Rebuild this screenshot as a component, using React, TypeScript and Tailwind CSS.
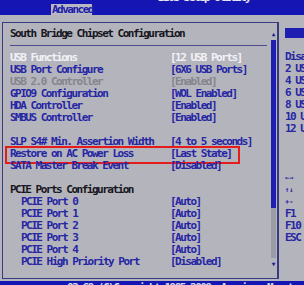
const rows: { label: string; value?: string; tone: "white" | "blue" | "gray" | "dark"; indent?: boolean; boxed?: boolean }[] = [
  { label: "USB Functions", value: "[12 USB Ports]", tone: "white" },
  { label: "USB Port Configure", value: "[6X6 USB Ports]", tone: "blue" },
  { label: "USB 2.0 Controller", value: "[Enabled]", tone: "gray" },
  { label: "GPIO9 Configuration", value: "[WOL Enabled]", tone: "blue" },
  { label: "HDA Controller", value: "[Enabled]", tone: "blue" },
  { label: "SMBUS Controller", value: "[Enabled]", tone: "blue" },
  { label: "", tone: "blue" },
  { label: "SLP_S4# Min. Assertion Width", value: "[4 to 5 seconds]", tone: "blue" },
  { label: "Restore on AC Power Loss", value: "[Last State]", tone: "blue", boxed: true },
  { label: "SATA Master Break Event", value: "[Disabled]", tone: "blue" },
  { label: "", tone: "blue" },
  { label: "PCIE Ports Configuration", tone: "dark" },
  { label: "PCIE Port 0", value: "[Auto]", tone: "blue", indent: true },
  { label: "PCIE Port 1", value: "[Auto]", tone: "blue", indent: true },
  { label: "PCIE Port 2", value: "[Auto]", tone: "blue", indent: true },
  { label: "PCIE Port 3", value: "[Auto]", tone: "blue", indent: true },
  { label: "PCIE Port 4", value: "[Auto]", tone: "blue", indent: true },
  { label: "PCIE High Priority Port", value: "[Disabled]", tone: "blue", indent: true },
];

const toneClass = {
  white: "text-[#f2f2f6]",
  blue: "text-[#2626a4]",
  gray: "text-[#85858e]",
  dark: "text-[#16161e]",
};

const help = ["Disable USB", "2 USB ports", "4 USB ports", "6 USB ports", "8 USB ports", "10 USB ports", "12 USB ports"];
const keys = ["←→", "↑↓", "+-", "F1", "F10", "ESC"];

export default function App() {
  return (
    <div
      className="w-[304px] h-[285px] overflow-hidden bg-[#b4b4bc] font-bold text-[11px] leading-[12px] tracking-[-1.5px] flex flex-col"
      style={{ fontFamily: '"DejaVu Sans Mono", "Liberation Mono", monospace' }}
    >
      {/* top bar */}
      <div className="relative h-[15px] shrink-0 bg-[#1515b4] overflow-hidden">
        <span className="absolute left-[158px] top-[-8px] text-[#e8e8f0]">BIOS Setup Utility</span>
        <div className="absolute left-[51px] top-[4px] w-[41px] h-[11px] bg-[#b8b8c2] text-[#2020a8] leading-[11px] pl-[1px]">
          Advanced
        </div>
      </div>

      {/* body */}
      <div className="flex flex-1 pt-[7px]">
        <div className="ml-[2px] w-[276px] h-[257px] border border-[#3a3a82] flex">
          <div className="flex-1 pt-[5px]">
            <div className="pl-[7px] text-[#16161e]">South Bridge Chipset Configuration</div>
            <div className="ml-[7px] mr-[4px] mt-[5px] h-px bg-[#4c4c8c]" />
            <div className="mt-[6px]">
              {rows.map((r, i) => (
                <div key={i} className={`relative flex h-[12px] ${toneClass[r.tone]}`}>
                  <span className={`${r.indent ? "pl-[18px]" : "pl-[7px]"} w-[167px] whitespace-nowrap`}>
                    {r.label}
                  </span>
                  {r.value && <span className="whitespace-nowrap">{r.value}</span>}
                  {r.boxed && (
                    <div className="absolute left-[2px] top-[-2px] w-[235px] h-[18px] border-2 border-[#e41c1c]" />
                  )}
                </div>
              ))}
            </div>
          </div>
          {/* scrollbar */}
          <div className="w-[5px] mr-[1px] flex flex-col items-center">
            <div className="mt-[8px] h-[6px] text-[6px] leading-[6px] text-[#1a1a8c] tracking-normal">▲</div>
            <div className="mt-[3px] w-[5px] h-[168px] bg-[#1e1eb0]" />
            <div className="w-[5px] h-[50px] bg-[#9c9ca6]" />
            <div className="mt-[3px] h-[6px] text-[6px] leading-[6px] text-[#1a1a8c] tracking-normal">▼</div>
          </div>
        </div>

        {/* help panel */}
        <div className="flex-1 h-[257px] border-l border-[#3a3a82] pl-[6px] overflow-hidden">
          <div className="mt-[6px] h-[10px] bg-[#1e1eb0]" />
          <div className="mt-[13px] text-[#2626a4]">
            {help.map((h) => (
              <div key={h} className="h-[12px] whitespace-nowrap">{h}</div>
            ))}
          </div>
          <div className="mt-[37px] text-[#2626a4]">
            {keys.map((k) => (
              <div key={k} className={`h-[12px] whitespace-nowrap ${k.length === 2 && !k.startsWith("F") ? "text-[7px] tracking-normal" : ""}`}>
                {k}
              </div>
            ))}
          </div>
        </div>
      </div>

      {/* bottom bar */}
      <div className="h-[4px] shrink-0 bg-[#1515b4] relative">
        <span className="absolute left-[62px] top-[1px] text-[#d8d8e8] whitespace-nowrap">
          v02.68 (C)Copyright 1985-2009, American Megatrends, Inc.
        </span>
      </div>
    </div>
  );
}
